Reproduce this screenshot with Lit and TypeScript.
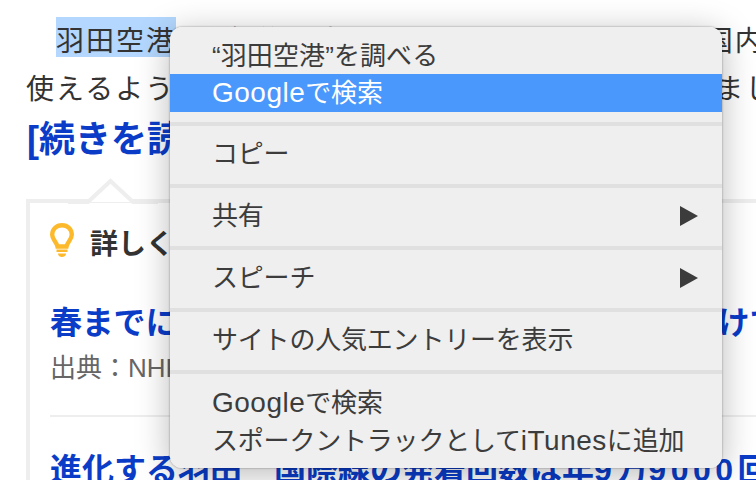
import { LitElement, html, css } from "lit";
import { customElement } from "lit/decorators.js";

@customElement("app-root")
export class AppRoot extends LitElement {
  static styles = css`
    :host {
      display: block;
      position: relative;
      width: 756px;
      height: 480px;
      overflow: hidden;
      background: #fff;
      font-family: "Liberation Sans", "Noto Sans CJK JP", sans-serif;
      color: #333;
    }
    .page { padding: 17px 0 0 26px; width: 800px; }
    .para { margin: 0; line-height: 48px; white-space: nowrap; font-size: 28px; letter-spacing: 2px; }
    .line { display: block; }
    .indent { padding-left: 30px; }
    .sel { background: #b3d7fe; display: inline-block; height: 40px; line-height: 50px; margin-right: 3px; }
    .more { margin: 2px 0 0; padding-left: 1px; font-size: 36px; font-weight: 700; line-height: 48px; color: #0a3cc8; white-space: nowrap; }
    .card {
      position: relative;
      margin-top: 35px;
      border: 4px solid #eeeeee;
      padding: 20px 20px 0;
      height: 300px;
    }
    .notch {
      position: absolute;
      left: 38px;
      top: -25px;
    }
    .head { display: flex; align-items: flex-start; gap: 16px; height: 36px; }
    .head b { font-size: 28px; line-height: 36px; margin-top: 4px; color: #333; font-weight: 700; white-space: nowrap; }
    .link { font-size: 32px; font-weight: 700; color: #0a3cc8; line-height: 44px; white-space: nowrap; }
    .l1 { margin-top: 42px; letter-spacing: -0.2px; }
    .src { font-size: 26px; line-height: 36px; color: #666; margin-top: 5px; white-space: nowrap; }
    .rule { border-top: 2px solid #eeeeee; margin: 29px 0 31px; width: 800px; }
    .nums { letter-spacing: 4.500px; }
    .menu {
      position: absolute;
      left: 170px;
      top: 27px;
      width: 552px;
      height: 441px;
      background: #efefef;
      border-radius: 12px;
      overflow: hidden;
      color: #3c3c3c;
      font-size: 26px;
      letter-spacing: -0.2px;
    }
    .shadow {
      position: absolute;
      left: 170px;
      top: 27px;
      width: 552px;
      height: 441px;
      border-radius: 12px;
      box-shadow: 0 0 2px rgba(0, 0, 0, .45), 0 6px 34px rgba(0, 0, 0, .28);
    }
    .group { padding: 8px 0 12px; border-bottom: 4px solid #e0e0e0; }
    .group.first { padding: 9px 0 10px; }
    .group.last { padding: 9px 0 0; border-bottom: 0; }
    .row {
      box-sizing: border-box;
      height: 38px;
      line-height: 38px;
      padding: 2px 24px 0 42px;
      display: flex;
      justify-content: space-between;
      align-items: center;
      white-space: nowrap;
    }
    .row.tight { padding-top: 1px; letter-spacing: 0.1px; }
    .row.on { padding-top: 0; background: #4a98fc; color: #fff; }
    .lat { font-size: 28px; letter-spacing: 0.5px; }
    .arrow { width: 18px; height: 20px; fill: #3c3c3c; display: block; }
  `;

  private arrow() {
    return html`<svg class="arrow" viewBox="0 0 18 20"><path d="M0 0L18 10L0 20Z"></path></svg>`;
  }

  render() {
    return html`
      <div class="page">
        <p class="para">
          <span class="line indent"><span class="sel">羽田空港</span>、5年後の変わりっぷりとかはさらに、国内線</span>
          <span class="line">使えるようになった新しい国際線ターミナルができました</span>
        </p>
        <p class="more">[続きを読む]</p>
        <div class="card">
          <svg class="notch" width="90" height="26" viewBox="0 0 90 26">
            <path d="M0 24H20L42.500 3L65 24H90" fill="#fff" stroke="#eeeeee" stroke-width="4"></path>
          </svg>
          <div class="head">
            <svg width="24" height="36" viewBox="0 0 24 36">
              <path d="M12 2.200C6.200 2.200 2.200 6.500 2.200 11.700C2.200 16.500 6.500 18.500 7.500 23.500H16.500C17.500 18.500 21.800 16.500 21.800 11.700C21.800 6.500 17.800 2.200 12 2.200Z" fill="none" stroke="#fdb92c" stroke-width="4.400"></path>
              <path d="M6.500 26.500H17.500V29H6.500ZM8 30.500H16C16 32.800 14.200 34 12 34C9.800 34 8 32.800 8 30.500Z" fill="#fdb92c"></path>
            </svg>
            <b>詳しくはこちら</b>
          </div>
          <div class="link l1">春までに国際線の発着回数を増やす新計画に向けて</div>
          <div class="src">出典：NHK</div>
          <div class="rule"></div>
          <div class="link">進化する羽田　国際線の発着回数は年<span class="nums">9</span>万<span class="nums">9000</span>回</div>
        </div>
      </div>
      <div class="shadow"></div>
      <div class="menu">
        <div class="group first">
          <div class="row tight">“羽田空港”を調べる</div>
          <div class="row on"><span><span class="lat">Google</span>で検索</span></div>
        </div>
        <div class="group"><div class="row">コピー</div></div>
        <div class="group"><div class="row">共有${this.arrow()}</div></div>
        <div class="group"><div class="row">スピーチ${this.arrow()}</div></div>
        <div class="group"><div class="row">サイトの人気エントリーを表示</div></div>
        <div class="group last">
          <div class="row"><span><span class="lat">Google</span>で検索</span></div>
          <div class="row"><span>スポークントラックとして<span class="lat">iTunes</span>に追加</span></div>
        </div>
      </div>
    `;
  }
}
